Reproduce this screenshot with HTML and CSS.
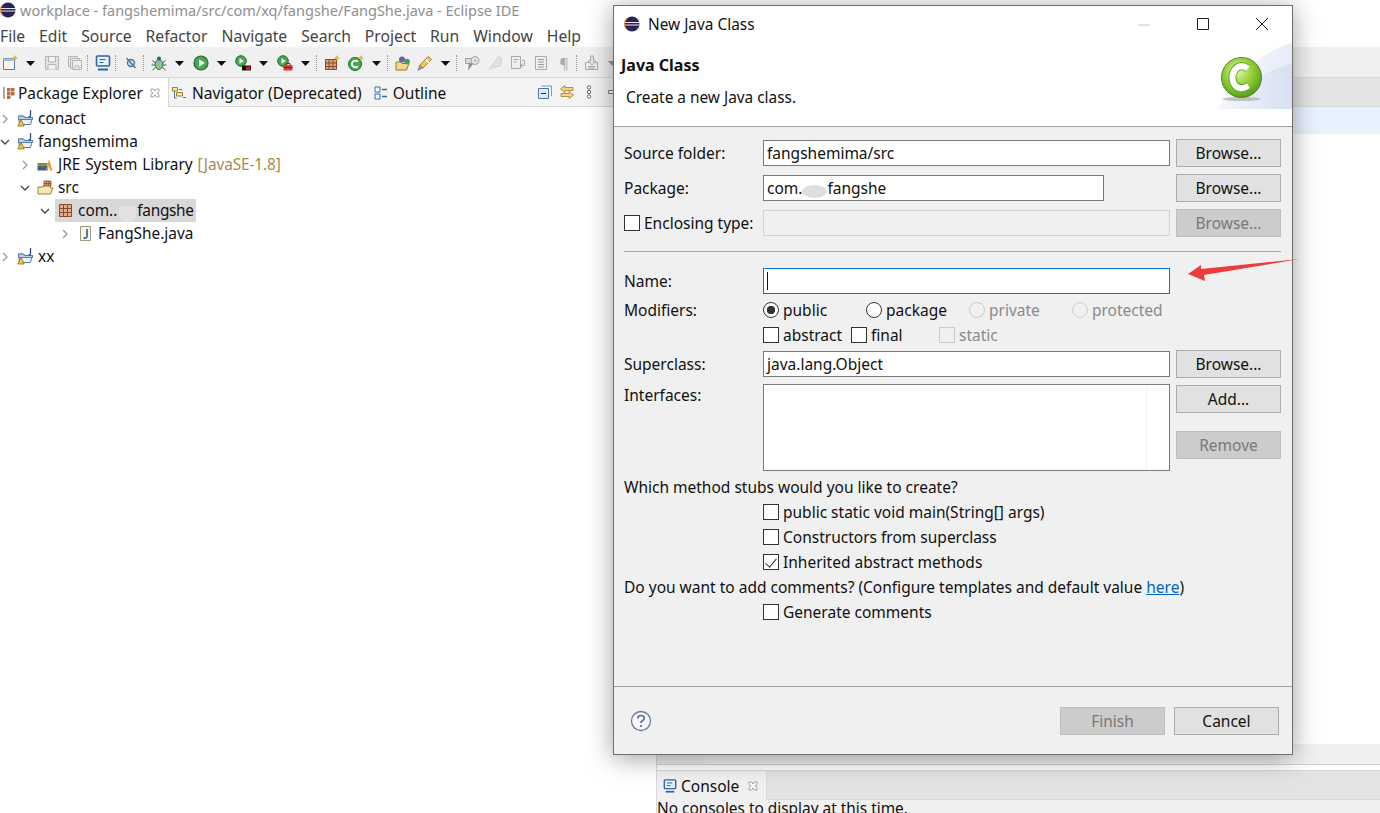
FILE: index.html
```html
<!DOCTYPE html>
<html lang="en">
<head>
  <meta charset="UTF-8" />
  <title>New Java Class</title>
  <link rel="stylesheet" href="styles.css">
</head>
<body>
  <svg class="defs" width="0" height="0">
    <symbol id="project" viewBox="0 0 17 17">
      <path d="M1.500 6h5l1 1.500h8l-2 7h-11z" fill="#e8f0f8" stroke="#5a7ea8"/>
      <path d="M1.500 6h5l1 1.500h8v2h-14z" fill="#b8d0e8" stroke="#5a7ea8"/>
      <path d="M13.500 0v5.500q0 1.500-2 1.500" fill="none" stroke="#2a4a88" stroke-width="1.300"/>
      <path d="M4 9.500l3.200 6.500H.8z" fill="#f5c542" stroke="#8a6a18" stroke-width=".8"/>
    </symbol>
    <symbol id="chevron-r" viewBox="0 0 10 10"><path d="M3 1l4 4-4 4" fill="none" stroke="#9a9a9a" stroke-width="1.300"/></symbol>
    <symbol id="chevron-d" viewBox="0 0 10 10"><path d="M1 3l4 4 4-4" fill="none" stroke="#444" stroke-width="1.300"/></symbol>
    <symbol id="eclipse" viewBox="0 0 16 16">
      <circle cx="8" cy="8" r="7.500" fill="#2c2255"/>
      <path d="M1 6.500h14M.5 9h15" stroke="#e8e8f0" stroke-width="1.100"/>
      <path d="M3 2.200a7.500 7.500 0 0 0 0 11.600" fill="none" stroke="#e89a40" stroke-width="1"/>
    </symbol>
    <symbol id="caret" viewBox="0 0 9 5"><path d="M0 0h9L4.500 5z" fill="#111"/></symbol>
    <symbol id="console" viewBox="0 0 16 16">
      <rect x="1.500" y="1" width="13" height="10" rx="1" fill="#e6eef8" stroke="#2f66a8" stroke-width="1.600"/>
      <path d="M4.500 4.500h6M4.500 7.500h4" stroke="#2f66a8" stroke-width="1.100"/>
      <path d="M3 14.500h10" stroke="#2f66a8" stroke-width="2"/>
    </symbol>
    <symbol id="close" viewBox="0 0 10 10"><path d="M1 1h2.500L5 3l1.500-2H9v2.500L7 5l2 1.500V9H6.500L5 7 3.500 9H1V6.500L3 5 1 3.500z" fill="#fff" stroke="#8a8a8a" stroke-width=".8"/></symbol>
  </svg>

  <div class="workbench">
    <header class="titlebar">
      <svg class="title-logo"><use href="#eclipse"/></svg>
      <span>workplace - fangshemima/src/com/xq/fangshe/FangShe.java - Eclipse IDE</span>
    </header>

    <nav class="menubar">
      <a>File</a><a>Edit</a><a>Source</a><a>Refactor</a><a>Navigate</a><a>Search</a><a>Project</a><a>Run</a><a>Window</a><a>Help</a>
    </nav>

    <div class="toolbar">
      <svg class="tool" viewBox="0 0 16 16"><path d="M1.500 3.500h11v11h-11z" fill="#fbf8ea" stroke="#5a7ea8"/><path d="M1.500 3.500h11v2.500h-11z" fill="#9fc0e0"/><path d="M13 .5l.8 1.800 1.800.7-1.800.8-.8 1.800-.8-1.800-1.800-.8 1.800-.7z" fill="#f2c230" stroke="#c89a18" stroke-width=".4"/></svg>
      <svg class="caret"><use href="#caret"/></svg>
      <svg class="tool gap-l" viewBox="0 0 16 16"><path d="M1.500 1.500h13v13h-13z" fill="#e4e4e4" stroke="#b5b5b5"/><path d="M4.500 2v5h7V2M4 14.500V9.500h8v5" fill="#f2f2f2" stroke="#b5b5b5"/></svg>
      <svg class="tool gap-m" viewBox="0 0 16 16"><path d="M1.500 1.500h9v10h-9z" fill="#e8e8e8" stroke="#b5b5b5"/><path d="M3.500 3.500h9v10h-9z" fill="#e8e8e8" stroke="#b5b5b5"/><path d="M5.500 5.500h9v9h-9z" fill="#eee" stroke="#b5b5b5"/><path d="M8 14v-3h4v3" fill="none" stroke="#b5b5b5"/></svg>
      <i class="sep"></i>
      <svg class="tool"><use href="#console"/></svg>
      <i class="sep"></i>
      <svg class="tool" viewBox="0 0 16 16"><circle cx="8" cy="8" r="3.500" fill="#cfdcee" stroke="#3f78b4" stroke-width="1.400"/><path d="M3.500 3l9 10" stroke="#6a6a6a" stroke-width="1.300"/></svg>
      <i class="sep"></i>
      <svg class="tool" viewBox="0 0 16 16"><ellipse cx="8" cy="9.500" rx="3.800" ry="5" fill="#8cc48c" stroke="#2c6a58"/><circle cx="8" cy="3.500" r="2" fill="#2c6a58"/><path d="M1.500 5.500l3 2.500M.5 10h3.500M1.500 15l3-2.500M14.500 5.500l-3 2.500M15.500 10H12M14.500 15l-3-2.500" stroke="#2c6a58"/></svg>
      <svg class="caret"><use href="#caret"/></svg>
      <svg class="tool gap-l" viewBox="0 0 16 16"><circle cx="8" cy="8" r="7" fill="#46a850" stroke="#1f6a30" stroke-width="1.200"/><path d="M6 4.200L11.800 8 6 11.800z" fill="#fff"/></svg>
      <svg class="caret"><use href="#caret"/></svg>
      <svg class="tool gap-l" viewBox="0 0 16 16"><circle cx="6" cy="6" r="5.300" fill="#46a850" stroke="#1f6a30"/><path d="M4.500 3.200L8.800 6 4.500 8.800z" fill="#fff"/><rect x="7" y="10.500" width="9" height="5" fill="#111"/><rect x="11" y="11.500" width="4.500" height="3.500" fill="#d01818"/></svg>
      <svg class="caret"><use href="#caret"/></svg>
      <svg class="tool gap-l" viewBox="0 0 16 16"><circle cx="6" cy="6" r="5.300" fill="#46a850" stroke="#1f6a30"/><path d="M4.500 3.200L8.800 6 4.500 8.800z" fill="#fff"/><rect x="6.500" y="10" width="9" height="5.500" rx="1" fill="#e03434"/><path d="M9 10V8.500h4V10" fill="none" stroke="#a01818"/><path d="M6.500 12.500h9" stroke="#a01818"/></svg>
      <svg class="caret"><use href="#caret"/></svg>
      <i class="sep sep-after-caret"></i>
      <svg class="tool" viewBox="0 0 16 16"><path d="M1.500 4.500h11v10h-11z" fill="#d8a878" stroke="#8a4a2a"/><path d="M5 4.500v10M9 4.500v10M1.500 8h11M1.500 11.500h11" stroke="#8a4a2a"/><path d="M13 .5l.8 1.800 1.800.7-1.800.8-.8 1.800-.8-1.800-1.800-.8 1.800-.7z" fill="#f2c230" stroke="#c89a18" stroke-width=".4"/></svg>
      <svg class="tool gap-s" viewBox="0 0 16 16"><circle cx="7" cy="9" r="6.500" fill="#46a850" stroke="#1f6a30"/><path d="M9.800 6.600a3.400 3.400 0 1 0 0 4.800" fill="none" stroke="#fff" stroke-width="1.800"/><path d="M13 .5l.8 1.800 1.800.7-1.800.8-.8 1.800-.8-1.800-1.800-.8 1.800-.7z" fill="#f2c230" stroke="#c89a18" stroke-width=".4"/></svg>
      <svg class="caret"><use href="#caret"/></svg>
      <i class="sep sep-after-caret"></i>
      <svg class="tool" viewBox="0 0 16 16"><path d="M1 7h5l1 1.500h7l-2.500 6.500H1z" fill="#f4d68c" stroke="#9a7428"/><circle cx="7" cy="4.500" r="3" fill="#7a5ab0"/><circle cx="12" cy="6.500" r="2.800" fill="#4a9a5a"/></svg>
      <svg class="tool gap-xs" viewBox="0 0 16 16"><path d="M2.500 10.500L11 1.500l3.500 3L6 13z" fill="#f0c468" stroke="#a88030"/><path d="M9 5l3 2.800" stroke="#fff" stroke-width="1.200"/><path d="M2.500 10.500L.8 15.500 6 13z" fill="#9a9a9a" stroke="#777" stroke-width=".6"/></svg>
      <svg class="caret"><use href="#caret"/></svg>
      <i class="sep sep-after-caret"></i>
      <svg class="tool" viewBox="0 0 16 16"><path d="M1.500 3.500h8v5h-8z" fill="#d8d8d8" stroke="#a0a0a0"/><circle cx="11" cy="5.500" r="4" fill="#e8e8e8" stroke="#a0a0a0"/><circle cx="11" cy="5.500" r="1.500" fill="#bbb"/><path d="M5 8l-1 7.500L9 9z" fill="#8a8a8a"/></svg>
      <svg class="tool gap-m" viewBox="0 0 16 16"><path d="M5 10l7-8.500 2.500 2-1 7L7 12.500z" fill="#e2e2e2" stroke="#cfcfcf"/><path d="M.5 15.500L5 10l2 2.500z" fill="#d8d8d8"/></svg>
      <svg class="tool gap-m" viewBox="0 0 16 16"><path d="M1.500 1.500h9v12h-9z" fill="#eee" stroke="#aaa"/><path d="M3.500 4.500h5M3.500 7h3M12 5.500h2.500v5H11M12.500 8.500L10.500 10.500l2 2" fill="none" stroke="#aaa"/></svg>
      <svg class="tool gap-m" viewBox="0 0 16 16"><path d="M2.500 1.500h11v13h-11z" fill="#eee" stroke="#aaa"/><path d="M5 4.500h6M5 7h6M5 9.500h6M5 12h6" stroke="#999"/></svg>
      <span class="pilcrow">¶</span>
      <i class="sep"></i>
      <svg class="tool" viewBox="0 0 16 16"><path d="M1.500 7.500h12v7h-12z" fill="#eee" stroke="#aaa"/><path d="M6.500 1h3v5h2.500L8 10 4 6h2.500z" fill="#e4e4e4" stroke="#aaa"/><path d="M4 11.500h7M4 13h7" stroke="#aaa"/></svg>
      <svg class="caret muted"><use href="#caret"/></svg>
    </div>

    <div class="panes">
      <section class="explorer">
        <div class="tabs">
          <div class="tab tab-active">
            <svg class="tab-icon" viewBox="0 0 14 14"><path d="M2 1v12" stroke="#888" stroke-width="1.400"/><path d="M5 2h3.500v3.500H5zM9 2h3.500v3.500H9zM5 6h3.500v3.500H5zM9 6h3.500v3.500H9zM5 10h3.500v3H5z" fill="#b8703a"/></svg>
            <span>Package Explorer</span>
            <svg class="tab-close"><use href="#close"/></svg>
          </div>
          <div class="tab tab-plain">
            <svg class="tab-icon" viewBox="0 0 14 14"><path d="M.5 1.500h5v3.500h-5zM4.500 6.500h6v3.500h-6z" fill="#fbe8a0" stroke="#a08030"/><path d="M2.500 5v7h2M11 11.500h3M7 3.500h3" stroke="#3f7ab0" fill="none"/></svg>
            <span>Navigator (Deprecated)</span>
          </div>
          <div class="tab tab-plain tab-outline">
            <svg class="tab-icon" viewBox="0 0 14 14"><path d="M1 1h5v5H1zM1 8h5v5H1z" fill="#fff" stroke="#2f6ab0"/><path d="M8 3.500h5M8 10.500h5" stroke="#2f6ab0" stroke-width="1.400"/></svg>
            <span>Outline</span>
          </div>
          <div class="tab-actions">
            <svg class="tab-icon" viewBox="0 0 14 14"><path d="M3.500 1h10v10" fill="#f4f7fb" stroke="#7a9ac0"/><path d="M.5 3.500h10v10H.5z" fill="#dfe8f4" stroke="#4a78a8"/><path d="M3 8.500h5" stroke="#333"/></svg>
            <svg class="tab-icon" viewBox="0 0 14 14"><path d="M5 .5L.5 4 5 7.500V5.500h8V2.500H5zM9 6.500l4.500 3.500L9 13.500v-2H1v-3h8z" fill="#f3d488" stroke="#a87820" stroke-width=".8"/></svg>
            <svg class="tab-icon" viewBox="0 0 14 14"><circle cx="7" cy="2.500" r="1.700" fill="#fff" stroke="#666"/><circle cx="7" cy="7" r="1.700" fill="#fff" stroke="#666"/><circle cx="7" cy="11.500" r="1.700" fill="#fff" stroke="#666"/></svg>
            <svg class="tab-icon" viewBox="0 0 14 14"><path d="M4.500 5.500h9v3h-9z" fill="#fff" stroke="#777"/></svg>
          </div>
        </div>

        <ul class="tree">
          <li class="row"><svg class="twist"><use href="#chevron-r"/></svg><svg class="node-icon"><use href="#project"/></svg><span>conact</span></li>
          <li class="row"><svg class="twist"><use href="#chevron-d"/></svg><svg class="node-icon"><use href="#project"/></svg><span>fangshemima</span></li>
          <li class="row depth-1"><svg class="twist"><use href="#chevron-r"/></svg>
            <svg class="node-icon" viewBox="0 0 17 17"><path d="M.5 7h10v2.500H.5z" fill="#a87838"/><path d="M.5 9.500h10V12H.5z" fill="#2f7a58"/><path d="M.5 12h10v2.500H.5z" fill="#3f5aa0"/><path d="M9 14.500L12 3l3.500 11.500h-2.500L12 9l-1 5.500z" fill="#d8a040"/></svg>
            <span class="lib-name">JRE System Library <em class="decor">[JavaSE-1.8]</em></span></li>
          <li class="row depth-1"><svg class="twist"><use href="#chevron-d"/></svg>
            <svg class="node-icon" viewBox="0 0 17 17"><path d="M1 8h5l1-2h6.500v3H16l-2.500 6H1z" fill="#f8e8b8" stroke="#a08030"/><path d="M7 2h7v5H7zM9.300 2v5M11.700 2v5M7 4.500h7" fill="#d8a878" stroke="#8a4a2a" stroke-width=".8"/></svg>
            <span>src</span></li>
          <li class="row depth-2"><svg class="twist"><use href="#chevron-d"/></svg>
            <div class="selected">
              <svg class="node-icon" viewBox="0 0 17 17"><path d="M2.500 2.500h12v12h-12z" fill="#e0b088" stroke="#8a4a2a"/><path d="M6.500 2.500v12M10.500 2.500v12M2.500 6.500h12M2.500 10.500h12" stroke="#8a4a2a"/></svg>
              <span>com..</span><i class="smudge"></i><span class="pkg-tail">fangshe</span>
            </div></li>
          <li class="row depth-3"><svg class="twist"><use href="#chevron-r"/></svg>
            <svg class="node-icon" viewBox="0 0 17 17"><path d="M3.500 1.500h10v14h-10z" fill="#fbf6e4" stroke="#9a9a80"/><path d="M10 4v7q0 2.500-3.500 2" fill="none" stroke="#2f5a98" stroke-width="1.600"/></svg>
            <span>FangShe.java</span></li>
          <li class="row"><svg class="twist"><use href="#chevron-r"/></svg><svg class="node-icon"><use href="#project"/></svg><span>xx</span></li>
        </ul>
      </section>

      <section class="right-side">
        <div class="right-tabs"></div>
        <div class="right-editor"><div class="right-current"></div></div>
        <div class="right-lower"><div class="right-corner"></div></div>
        <div class="console-tabs">
          <div class="tab tab-active console-tab">
            <svg class="tab-icon"><use href="#console"/></svg>
            <span>Console</span>
            <svg class="tab-close"><use href="#close"/></svg>
          </div>
        </div>
        <p class="console-text">No consoles to display at this time.</p>
      </section>
    </div>
  </div>

  <!-- dialog window over the workbench -->
  <div class="dialog">
    <div class="dialog-title">
      <svg class="title-logo"><use href="#eclipse"/></svg>
      <span class="dialog-name">New Java Class</span>
      <div class="win-btns">
        <svg class="win-btn" viewBox="0 0 46 14"><path d="M17 8h12" stroke="#c4c4c4"/></svg>
        <svg class="win-btn" viewBox="0 0 46 14"><path d="M17.500 1.500h11v11h-11z" fill="none" stroke="#222"/></svg>
        <svg class="win-btn" viewBox="0 0 46 14"><path d="M17 1l12 12M29 1L17 13" fill="none" stroke="#222"/></svg>
      </div>
    </div>

    <div class="banner">
      <div class="banner-text">
        <h1>Java Class</h1>
        <p>Create a new Java class.</p>
      </div>
      <svg class="banner-art" viewBox="0 0 75 66">
        <defs>
          <radialGradient id="ball" cx="42%" cy="35%" r="70%"><stop offset="0" stop-color="#e0f4a8"/><stop offset=".55" stop-color="#8ccc30"/><stop offset="1" stop-color="#4f9418"/></radialGradient>
          <linearGradient id="swoosh" x1="0" y1="0" x2="1" y2="0"><stop offset="0" stop-color="#fafbfe"/><stop offset="1" stop-color="#e6ecf8"/></linearGradient>
          <linearGradient id="swoosh2" x1="0" y1="0" x2="1" y2="0"><stop offset="0" stop-color="#f4f6fc"/><stop offset="1" stop-color="#d6e0f2"/></linearGradient>
        </defs>
        <path d="M0 66C12 40 40 10 75 0v66z" fill="url(#swoosh)"/>
        <path d="M0 66C20 45 45 28 75 21v45z" fill="url(#swoosh2)"/>
        <ellipse cx="24.500" cy="56" rx="19" ry="2" fill="#8a8a7a" opacity=".45"/>
        <circle cx="24.500" cy="34.500" r="20" fill="url(#ball)" stroke="#5f7f28" stroke-width="1"/>
        <path d="M31 25.500Q24 20.500 18.500 26 13.500 32 16.500 40 20 47 28 44.500L31.500 42.500" fill="none" stroke="#5fae28" stroke-width="8"/>
        <path d="M31 25.500Q24 20.500 18.500 26 13.500 32 16.500 40 20 47 28 44.500L31.500 42.500" fill="none" stroke="#fff" stroke-width="6"/>
      </svg>
    </div>

    <div class="dialog-body">
      <div class="form-grid">
        <label>Source folder:</label>
        <div class="field">fangshemima/src</div>
        <button class="btn">Browse...</button>

        <label>Package:</label>
        <div class="field field-short">com.<i class="smudge smudge-field"></i>fangshe</div>
        <button class="btn">Browse...</button>

        <label class="check-label"><i class="check"></i>Enclosing type:</label>
        <div class="field field-off"></div>
        <button class="btn btn-off">Browse...</button>
      </div>

      <hr class="rule">

      <div class="form-grid form-lower">
        <label>Name:</label>
        <div class="field field-focus"><i class="text-caret"></i></div>
        <svg class="arrow" viewBox="0 0 112 23"><path d="M0 15L13 6v4L112 0 16 16l1 6z" fill="#ee3b3b"/></svg>

        <label>Modifiers:</label>
        <div class="modifiers">
          <span class="opt opt-public"><i class="radio radio-on"></i>public</span>
          <span class="opt opt-package"><i class="radio"></i>package</span>
          <span class="opt opt-private off"><i class="radio"></i>private</span>
          <span class="opt off"><i class="radio"></i>protected</span>
        </div>
        <span></span>

        <span></span>
        <div class="modifiers">
          <span class="opt opt-abstract"><i class="check"></i>abstract</span>
          <span class="opt opt-final"><i class="check"></i>final</span>
          <span class="opt off"><i class="check"></i>static</span>
        </div>
        <span></span>

        <label>Superclass:</label>
        <div class="field">java.lang.Object</div>
        <button class="btn">Browse...</button>

        <label class="label-top">Interfaces:</label>
        <div class="field field-list"><i class="list-scroll"></i></div>
        <div class="btn-stack">
          <button class="btn">Add...</button>
          <button class="btn btn-off">Remove</button>
        </div>
      </div>

      <p class="question">Which method stubs would you like to create?</p>
      <div class="stub-list">
        <span class="opt"><i class="check"></i>public static void main(String[] args)</span>
        <span class="opt"><i class="check"></i>Constructors from superclass</span>
        <span class="opt"><i class="check check-on"></i>Inherited abstract methods</span>
      </div>
      <p class="question question-next">Do you want to add comments? (Configure templates and default value <a class="link">here</a>)</p>
      <div class="stub-list">
        <span class="opt"><i class="check"></i>Generate comments</span>
      </div>
    </div>

    <footer class="dialog-foot">
      <svg class="help" viewBox="0 0 22 22"><circle cx="11" cy="11" r="9.500" fill="#f5f7fb" stroke="#6a7a9a" stroke-width="1.300"/><path d="M7.800 8.500q0-3 3.200-3t3.200 2.800q0 1.800-2 2.700-1.200.6-1.200 2" fill="none" stroke="#5a6a8a" stroke-width="1.700"/><circle cx="11" cy="16" r="1.100" fill="#5a6a8a"/></svg>
      <button class="btn btn-off btn-wide">Finish</button>
      <button class="btn btn-wide">Cancel</button>
    </footer>
  </div>
</body>
</html>
```

FILE: styles.css
```css
* {
  box-sizing: border-box;
}

html, body {
  height: 100%;
}

body {
  margin: 0;
  background: #fff;
  color: #111;
  font-family: "Noto Sans", "Open Sans", sans-serif;
  font-size: 15.4px;
  overflow: hidden;
  position: relative;
}

.defs {
  position: absolute;
}

.workbench {
  height: 813px;
  display: flex;
  flex-direction: column;
}

.titlebar {
  height: 19px;
  flex: none;
  display: flex;
  align-items: center;
  gap: 4px;
  color: #8f8f8f;
  font-size: 14.500px;
}

.title-logo {
  width: 16px;
  height: 16px;
  flex: none;
}

.menubar {
  height: 28px;
  flex: none;
  display: flex;
  align-items: center;
  gap: 14px;
  padding-top: 6px;
  color: #444;
  font-size: 15.700px;
}

.toolbar {
  height: 30px;
  flex: none;
  display: flex;
  align-items: center;
  padding: 2px 0 0 2px;
  background: #f0f0f0;
}

.tool {
  width: 16px;
  height: 16px;
  flex: none;
}

.caret {
  width: 9px;
  height: 5px;
  margin-left: 8px;
  flex: none;
}

.caret.muted {
  opacity: .4;
}

.gap-l {
  margin-left: 9px;
}

.gap-m {
  margin-left: 7px;
}

.gap-s {
  margin-left: 8px;
}

.gap-xs {
  margin-left: 6px;
}

.sep {
  width: 1px;
  height: 16px;
  margin: 0 7px 0 4px;
  border-left: 1px dotted #999;
  flex: none;
}

.sep-after-caret {
  margin-left: 6px;
}

.pilcrow {
  width: 16px;
  margin-left: 7px;
  color: #aaa;
  font-size: 14px;
  text-align: center;
}

.panes {
  flex: 1;
  display: flex;
  min-height: 0;
}

.explorer {
  width: 656px;
  flex: none;
}

.tabs {
  height: 30px;
  display: flex;
  align-items: stretch;
  background: #f3f3f3;
  border-top: 1px solid #d8d8d8;
  border-bottom: 1px solid #d8d8d8;
}

.tab {
  display: flex;
  align-items: center;
  gap: 2px;
  padding-top: 1px;
}

.tab-active {
  width: 169px;
  margin-bottom: -1px;
  padding-left: 2px;
  background: #fff;
  border-right: 1px solid #d8d8d8;
}

.tab-plain {
  gap: 6px;
  padding-left: 3px;
  font-size: 15.500px;
}

.tab-outline {
  gap: 5px;
  margin-left: 12px;
  padding-left: 0;
}

.tab-icon {
  width: 14px;
  height: 14px;
  flex: none;
}

.tab-close {
  width: 10px;
  height: 10px;
  margin-left: 5px;
  flex: none;
}

.tab-actions {
  display: flex;
  align-items: center;
  gap: 8px;
  margin: 0 38px 0 auto;
}

.tree {
  list-style: none;
  margin: 0;
  padding: 0;
}

.row {
  height: 23px;
  display: flex;
  align-items: center;
}

.depth-1 {
  padding-left: 20px;
}

.depth-2 {
  padding-left: 40px;
}

.depth-3 {
  padding-left: 60px;
}

.twist {
  width: 10px;
  height: 10px;
  margin-right: 7px;
  flex: none;
}

.node-icon {
  width: 17px;
  height: 17px;
  margin-right: 4px;
  flex: none;
}

.lib-name {
  word-spacing: .8px;
}

.decor {
  color: #a88a50;
  font-style: normal;
  word-spacing: 0;
  letter-spacing: -.1px;
}

.selected {
  height: 23px;
  margin-left: -2px;
  padding: 0 2px;
  display: flex;
  align-items: center;
  background: #d8d8d8;
}

.pkg-tail {
  letter-spacing: -.3px;
}

.smudge {
  width: 17px;
  height: 16px;
  margin: 6px 1px 0 2px;
  display: inline-block;
  border-radius: 2px 2px 7px 7px;
  background: #e2e2e2;
  flex: none;
}

.right-side {
  flex: 1;
  display: flex;
  flex-direction: column;
  border-left: 1px solid #d8d8d8;
}

.right-tabs {
  height: 30px;
  flex: none;
  background: #e4e4e4;
  border-top: 1px solid #d8d8d8;
  border-bottom: 1px solid #d8d8d8;
}

.right-editor {
  flex: 1;
}

.right-current {
  height: 27px;
  background: #e8f2fe;
}

.right-lower {
  height: 21px;
  flex: none;
  background: #f0f0f0;
  border-bottom: 1px solid #d0d0d0;
  margin-bottom: 5px;
}

.right-corner {
  width: 48px;
  height: 100%;
  background: #ececec;
}

.console-tabs {
  height: 30px;
  flex: none;
  background: #e3e3e3;
  border-top: 1px solid #d8d8d8;
  border-bottom: 1px solid #d8d8d8;
}

.console-tab {
  width: 110px;
  height: 29px;
  gap: 4px;
  padding-left: 6px;
  background: #f0f0f0;
  font-size: 15.500px;
}

.console-tab .tab-close {
  margin-left: 5px;
}

.console-text {
  height: 13px;
  flex: none;
  margin: 0;
  background: #f0f0f0;
  line-height: 18px;
  overflow: hidden;
  white-space: nowrap;
}

/* dialog */
.dialog {
  position: absolute;
  left: 613px;
  top: 5px;
  width: 680px;
  height: 750px;
  display: flex;
  flex-direction: column;
  background: #f0f0f0;
  border: 1px solid #6e6e6e;
  box-shadow: 0 3px 24px rgba(0, 0, 0, .38);
}

.dialog-title {
  height: 36px;
  flex: none;
  display: flex;
  align-items: center;
  gap: 8px;
  padding-left: 10px;
  background: #fff;
}

.win-btns {
  display: flex;
  margin-left: auto;
  padding-right: 7px;
  gap: 13px;
}

.win-btn {
  width: 46px;
  height: 14px;
}

.banner {
  height: 85px;
  flex: none;
  display: flex;
  justify-content: space-between;
  align-items: flex-end;
  background: #fff;
  border-bottom: 1px solid #a0a0a0;
}

.banner-text {
  align-self: flex-start;
  padding: 12px 0 0 7px;
}

.banner h1 {
  margin: 0;
  font-size: 16px;
  font-weight: 700;
}

.banner p {
  margin: 11px 0 0 5px;
}

.banner-art {
  width: 75px;
  height: 66px;
  margin-bottom: 17px;
}

.dialog-body {
  flex: 1;
  padding: 12px 11px 0 10px;
  font-size: 15.500px;
}

.form-grid {
  display: grid;
  grid-template-columns: 133px 407px 105px;
  column-gap: 6px;
  row-gap: 7px;
  align-items: center;
}

.form-lower {
  grid-template-rows: 26px 32px 18px 40px auto;
  row-gap: 0;
}

.form-grid label {
  white-space: nowrap;
}

.check-label {
  display: flex;
  align-items: center;
  gap: 4px;
}

.field {
  height: 26px;
  padding: 0 3px;
  display: flex;
  align-items: center;
  background: #fff;
  border: 1px solid #7a7a7a;
}

.field-short {
  width: 341px;
}

.field-off {
  background: #f0f0f0;
  border-color: #d4d4d4;
}

.field-focus {
  border-color: #0078d7;
}

.field-list {
  height: 87px;
  align-self: start;
  position: relative;
}

.list-scroll {
  position: absolute;
  top: 0;
  bottom: 0;
  right: 22px;
  border-left: 1px solid #f0f4f8;
}

.text-caret {
  width: 1px;
  height: 18px;
  background: #111;
}

.btn {
  height: 28px;
  padding: 0;
  background: #e1e1e1;
  border: 1px solid #adadad;
  color: #111;
  font: inherit;
}

.btn-off {
  background: #cccccc;
  border-color: #bfbfbf;
  color: #787878;
}

.btn-stack {
  align-self: start;
  display: flex;
  flex-direction: column;
  gap: 18px;
  margin-top: 1px;
}

.label-top {
  align-self: start;
}

.arrow {
  width: 112px;
  height: 23px;
  align-self: start;
  margin: -9px 0 0 12px;
}

.rule {
  height: 1px;
  margin: 14px 0 16px;
  border: 0;
  background: #a8a8a8;
}

.modifiers {
  height: 25px;
  display: flex;
  align-items: center;
  white-space: nowrap;
}

.opt {
  display: inline-flex;
  align-items: center;
  gap: 4px;
}

.opt.off {
  color: #8a8a8a;
}

.opt-public {
  width: 103px;
}

.opt-package {
  width: 103px;
}

.opt-private {
  width: 103px;
}

.opt-abstract {
  width: 88px;
}

.opt-final {
  width: 88px;
}

.radio {
  width: 16px;
  height: 16px;
  flex: none;
  display: inline-block;
  border: 1px solid #333;
  border-radius: 50%;
  background: #fff;
}

.radio-on {
  background: radial-gradient(circle, #333 0 4px, #fff 4.500px);
}

.off .radio, .off .check {
  border-color: #ccc;
  background: #f0f0f0;
}

.check {
  width: 16px;
  height: 16px;
  flex: none;
  display: inline-block;
  border: 1px solid #333;
  background: #fff;
}

.check-on {
  position: relative;
}

.check-on::after {
  content: "";
  position: absolute;
  left: 4px;
  top: 1px;
  width: 5px;
  height: 10px;
  border: solid #333;
  border-width: 0 1px 1px 0;
  transform: rotate(40deg);
}

.question {
  margin: 4px 0 0;
  height: 25px;
  line-height: 25px;
  white-space: nowrap;
}

.question-next {
  margin-top: 1px;
}

.stub-list {
  margin-top: -1px;
  padding-left: 139px;
  display: flex;
  flex-direction: column;
}

.stub-list .opt {
  height: 25px;
}

.link {
  color: #0066cc;
  text-decoration: underline;
}

.smudge-field {
  width: 25px;
  height: 13px;
  margin: 7px 0 0;
  border-radius: 50%;
  background: #dedede;
}

.dialog-foot {
  height: 68px;
  flex: none;
  display: flex;
  align-items: center;
  gap: 9px;
  padding: 0 13px 0 16px;
  border-top: 1px solid #a0a0a0;
  font-size: 15.500px;
}

.help {
  width: 22px;
  height: 22px;
  margin-right: auto;
}

.btn-wide {
  width: 105px;
}
```
